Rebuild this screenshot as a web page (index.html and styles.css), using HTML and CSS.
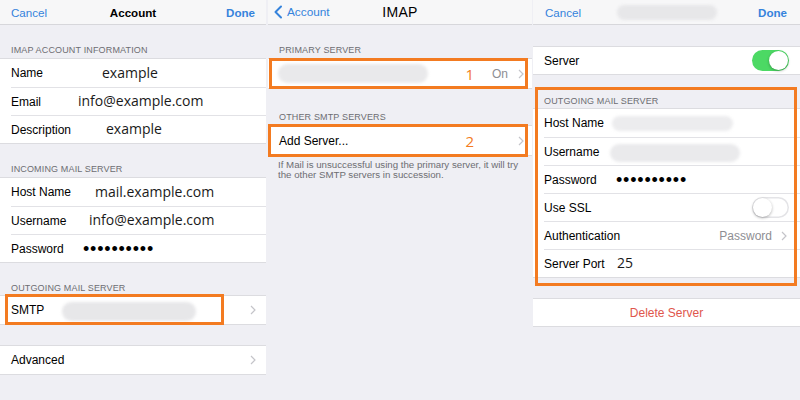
FILE: index.html
```html
<!DOCTYPE html>
<html>
<head>
<meta charset="utf-8">
<link rel="stylesheet" href="styles.css">
</head>
<body>
<div class="screen">
  <!-- Panel 1 -->
  <section class="panel p1">
    <header class="nav">
      <span class="nav-l link">Cancel</span>
      <span class="nav-t bold">Account</span>
      <span class="nav-r link bold">Done</span>
    </header>
    <div class="sh h34">IMAP ACCOUNT INFORMATION</div>
    <div class="grp">
      <div class="row"><span class="lbl o91">Name</span><span class="val">example</span></div>
      <div class="row"><span class="lbl o67">Email</span><span class="val">info@example.com</span></div>
      <div class="row"><span class="lbl o95">Description</span><span class="val">example</span></div>
    </div>
    <div class="sh h35">INCOMING MAIL SERVER</div>
    <div class="grp">
      <div class="row"><span class="lbl o84">Host Name</span><span class="val">mail.example.com</span></div>
      <div class="row"><span class="lbl o78">Username</span><span class="val">info@example.com</span></div>
      <div class="row"><span class="lbl o72">Password</span><span class="dots">••••••••••</span></div>
    </div>
    <div class="sh h34 pb2">OUTGOING MAIL SERVER</div>
    <div class="grp">
      <div class="row"><span class="lbl o51">SMTP</span><span class="blob b-smtp"></span><span class="chev"><svg width="6" height="10" viewBox="0 0 6 10"><polyline points="1,1 5,5 1,9" fill="none" stroke="#c4c4c9" stroke-width="1.2"/></svg></span></div>
      <div class="mark m-smtp"></div>
    </div>
    <div class="gap22"></div>
    <div class="grp">
      <div class="row"><span class="lbl">Advanced</span><span class="chev"><svg width="6" height="10" viewBox="0 0 6 10"><polyline points="1,1 5,5 1,9" fill="none" stroke="#c4c4c9" stroke-width="1.2"/></svg></span></div>
    </div>
  </section>

  <!-- Panel 2 -->
  <section class="panel p2">
    <header class="nav">
      <span class="nav-l link back"><svg width="10" height="14" viewBox="0 0 10 14"><polyline points="8,1.5 2.5,7 8,12.5" fill="none" stroke="#3583dc" stroke-width="2" stroke-linecap="round" stroke-linejoin="round"/></svg>Account</span>
      <span class="nav-t big">IMAP</span>
      <span class="nav-r"></span>
    </header>
    <div class="sh h34">PRIMARY SERVER</div>
    <div class="grp">
      <div class="row r29 tight"><span class="blob b-primary"></span><span class="num">1</span><span class="detail on">On</span><span class="chev c10"><svg width="6" height="10" viewBox="0 0 6 10"><polyline points="1,1 5,5 1,9" fill="none" stroke="#c4c4c9" stroke-width="1.2"/></svg></span></div>
      <div class="mark m-primary"></div>
    </div>
    <div class="sh h38">OTHER SMTP SERVERS</div>
    <div class="grp">
      <div class="row r29 tight"><span class="lbl">Add Server...</span><span class="num">2</span><span class="chev c44"><svg width="6" height="10" viewBox="0 0 6 10"><polyline points="1,1 5,5 1,9" fill="none" stroke="#c4c4c9" stroke-width="1.2"/></svg></span></div>
      <div class="mark m-add"></div>
    </div>
    <p class="foot">If Mail is unsuccessful using the primary server, it will try the other SMTP servers in succession.</p>
  </section>

  <!-- Panel 3 -->
  <section class="panel p3">
    <header class="nav n3">
      <span class="nav-l link">Cancel</span>
      <span class="nav-t"><span class="blob b-title"></span></span>
      <span class="nav-r link bold">Done</span>
    </header>
    <div class="gap22"></div>
    <div class="grp">
      <div class="row r27 pr11"><span class="lbl">Server</span><span class="tgl on"></span></div>
    </div>
    <div class="gap15"></div>
    <div class="boxed">
      <div class="sh h20">OUTGOING MAIL SERVER</div>
      <div class="grp">
        <div class="row"><span class="lbl o68">Host Name</span><span class="blob b-host"></span></div>
        <div class="row"><span class="lbl o66">Username</span><span class="blob b-user"></span></div>
        <div class="row"><span class="lbl o72">Password</span><span class="dots">••••••••••</span></div>
        <div class="row pr11"><span class="lbl">Use SSL</span><span class="tgl off"></span></div>
        <div class="row pr13"><span class="lbl">Authentication</span><span class="detail push">Password</span><span class="chev c9"><svg width="6" height="10" viewBox="0 0 6 10"><polyline points="1,1 5,5 1,9" fill="none" stroke="#c4c4c9" stroke-width="1.2"/></svg></span></div>
        <div class="row"><span class="lbl o73">Server Port</span><span class="val">25</span></div>
      </div>
      <div class="mark m-out"></div>
    </div>
    <div class="gap22"></div>
    <div class="grp">
      <div class="row r27 full center"><span class="danger">Delete Server</span></div>
    </div>
  </section>
</div>
</body>
</html>
```

FILE: styles.css
```css
* { box-sizing: border-box; margin: 0; padding: 0; }

body {
  width: 800px;
  height: 400px;
  overflow: hidden;
  background: #efeff4;
  font-family: "Liberation Sans", Arial, sans-serif;
  color: #000;
}

.screen { display: flex; height: 400px; }

.panel {
  display: flex;
  flex-direction: column;
  background: #efeff4;
}
.p1 { width: 266px; }
.p2 { width: 264px; margin-left: 2px; }
.p3 { width: 267px; margin-left: 1px; }

/* nav bar */
.nav {
  height: 25px;
  flex: 0 0 25px;
  background: #f7f7f8;
  border-bottom: 1px solid #d7d7db;
  display: grid;
  grid-template-columns: 1fr auto 1fr;
  align-items: center;
  font-size: 11.6px;
}
.nav-l { padding-left: 11px; justify-self: start; }
.nav-r { padding-right: 11px; justify-self: end; }
.n3 .nav-l { padding-left: 12px; }
.n3 .nav-r { padding-right: 13px; }
.nav-t { justify-self: center; }
.link { color: #3583dc; }
.bold { font-weight: bold; }
.big { font-size: 14px; letter-spacing: 0.3px; }
.back { display: flex; align-items: center; padding-left: 5px; font-size: 11.8px; }
.back svg { margin-right: 4px; }

/* section headers */
.sh {
  display: flex;
  align-items: flex-end;
  padding: 0 11px 3px;
  font-size: 9px;
  line-height: 11px;
  color: #6d6d72;
  letter-spacing: 0.15px;
  flex-shrink: 0;
}
.h20 { height: 20px; padding-bottom: 2px; }
.h34 { height: 34px; }
.h35 { height: 35px; }
.h38 { height: 38px; }
.pb2 { padding-bottom: 2px; }

.gap22 { flex: 0 0 22px; }
.gap15 { flex: 0 0 15px; }

/* groups & rows */
.grp {
  position: relative;
  background: #fff;
  box-shadow: 0 1px 0 #dcdce0, 0 -1px 0 #dcdce0;
}
.row {
  height: 28px;
  margin-left: 11px;
  padding-right: 10px;
  display: flex;
  align-items: center;
  font-size: 12px;
}
.row + .row { border-top: 1px solid #e2e2e6; }
.r29 { height: 29px; }
.r27 { height: 27px; }
.tight { padding-right: 8px; }
.pr11 { padding-right: 11px; }
.pr13 { padding-right: 13px; }
.full { margin-left: 0; padding-right: 0; }
.center { justify-content: center; }

.lbl { flex: 0 0 auto; white-space: nowrap; }
.o51 { flex-basis: 51px; }
.o66 { flex-basis: 66px; }
.o67 { flex-basis: 67px; }
.o68 { flex-basis: 68px; }
.o72 { flex-basis: 72px; }
.o73 { flex-basis: 73px; }
.o78 { flex-basis: 78px; }
.o84 { flex-basis: 84px; }
.o91 { flex-basis: 91px; }
.o95 { flex-basis: 95px; }

.val {
  font-family: "Open Sans", sans-serif;
  font-size: 14px;
  color: #1a1a1a;
  margin-top: -2px;
}
.dots {
  font-family: "Liberation Sans", sans-serif;
  font-size: 18px;
  letter-spacing: 0.8px;
  line-height: 1;
}

.chev { margin-left: auto; display: flex; align-items: center; }
.c9 { margin-left: 9px; }
.c10 { margin-left: 10px; }
.c44 { margin-left: 44px; }

.detail { color: #8e8e93; font-size: 12px; }
.on { margin-left: 18px; }
.push { margin-left: auto; }

.num {
  margin-left: auto;
  font-family: "Open Sans", sans-serif;
  font-size: 15px;
  color: #f37b21;
}

.foot {
  padding: 5px 11px 0 10px;
  font-size: 9.7px;
  line-height: 10px;
  color: #6d6d72;
}

.danger { color: #e0564c; font-size: 12px; }

/* blurred placeholders */
.blob {
  display: block;
  background: #e7e7e9;
  border-radius: 10px;
  filter: blur(1.5px);
}
.b-smtp { width: 134px; height: 19px; margin-top: 3px; }
.b-primary { width: 150px; height: 19px; margin-left: -1px; background: #e9e9eb; }
.b-host { width: 121px; height: 15px; background: #ececee; }
.b-user { width: 130px; height: 18px; margin-top: 3px; background: #eaeaec; }
.b-title { width: 100px; height: 15px; background: #e7e7e9; }

/* toggles */
.tgl {
  position: relative;
  margin-left: auto;
  width: 37px;
  height: 21px;
  border-radius: 11px;
}
.tgl.on { background: #4cd964; }
.tgl.off { background: #fff; box-shadow: inset 0 0 0 1.5px #e4e4e7; }
.tgl::after {
  content: "";
  position: absolute;
  top: 1px;
  width: 19px;
  height: 19px;
  border-radius: 50%;
  background: #fff;
  box-shadow: 0 1px 3px rgba(0,0,0,0.3);
}
.tgl.on::after { right: 1px; }
.tgl.off::after { left: 1px; }

/* orange annotation frames */
.boxed { position: relative; }
.mark {
  position: absolute;
  border: 3px solid #f37b21;
  pointer-events: none;
}
.m-smtp { left: 5px; top: -2px; width: 219px; height: 31px; }
.m-primary { left: 1px; top: -1px; width: 259px; height: 31px; }
.m-add { left: 0; top: -2px; width: 260px; height: 33px; }
.m-out { left: 2px; right: 3px; top: -2px; height: 199px; }
```
